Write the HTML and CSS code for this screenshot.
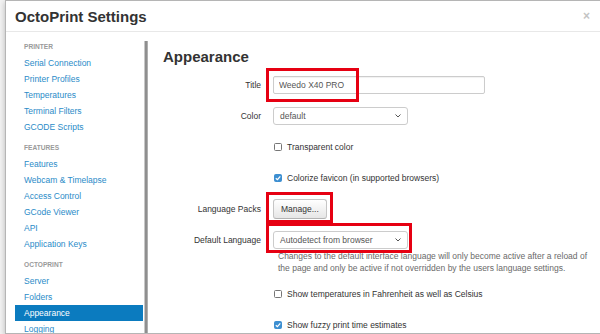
FILE: index.html
```html
<!DOCTYPE html>
<html lang="en">
<head>
    <meta charset="UTF-8">
    <meta name="viewport" content="width=device-width, initial-scale=1.0">
    <title>OctoPrint Settings</title>
    <link rel="stylesheet" href="styles.css">
</head>
<body>
    <div class="modal">
        <div class="modal-header">
            <h3 class="modal-title">OctoPrint Settings</h3>
            <button class="close">&times;</button>
        </div>

        <div class="modal-body">
            <!-- sidebar navigation -->
            <div class="sidebar">
                <ul class="nav-list">
                    <li class="nav-header">Printer</li>
                    <li><a href="#">Serial Connection</a></li>
                    <li><a href="#">Printer Profiles</a></li>
                    <li><a href="#">Temperatures</a></li>
                    <li><a href="#">Terminal Filters</a></li>
                    <li><a href="#">GCODE Scripts</a></li>
                    <li class="nav-header">Features</li>
                    <li><a href="#">Features</a></li>
                    <li><a href="#">Webcam &amp; Timelapse</a></li>
                    <li><a href="#">Access Control</a></li>
                    <li><a href="#">GCode Viewer</a></li>
                    <li><a href="#">API</a></li>
                    <li><a href="#">Application Keys</a></li>
                    <li class="nav-header">OctoPrint</li>
                    <li><a href="#">Server</a></li>
                    <li><a href="#">Folders</a></li>
                    <li class="active"><a href="#">Appearance</a></li>
                    <li><a href="#">Logging</a></li>
                </ul>
                <div class="scrollbar"></div>
            </div>

            <!-- appearance settings -->
            <div class="content">
                <h3 class="section-title">Appearance</h3>
                <form class="form-horizontal">
                    <div class="control-group">
                        <label class="control-label">Title</label>
                        <div class="controls">
                            <input type="text" class="text-input" value="Weedo X40 PRO">
                            <span class="mark mark-title"></span>
                        </div>
                    </div>

                    <div class="control-group">
                        <label class="control-label">Color</label>
                        <div class="controls">
                            <div class="select">
                                <span>default</span>
                                <svg width="6" height="4" viewBox="0 0 6 4"><path d="M0.5 0.5L3 3L5.5 0.5" fill="none" stroke="#555" stroke-width="1"/></svg>
                            </div>
                        </div>
                    </div>

                    <div class="control-group">
                        <div class="controls">
                            <label class="checkbox"><span class="box"></span>Transparent color</label>
                        </div>
                    </div>

                    <div class="control-group">
                        <div class="controls">
                            <label class="checkbox"><span class="box checked"><svg width="8" height="8" viewBox="0 0 8 8"><path d="M1.8 4.2L3.4 5.7L6.3 2.4" fill="none" stroke="#fff" stroke-width="1.2"/></svg></span>Colorize favicon (in supported browsers)</label>
                        </div>
                    </div>

                    <div class="control-group">
                        <label class="control-label">Language Packs</label>
                        <div class="controls">
                            <button type="button" class="btn">Manage...</button>
                            <span class="mark mark-manage"></span>
                        </div>
                    </div>

                    <div class="control-group group-help">
                        <label class="control-label">Default Language</label>
                        <div class="controls">
                            <div class="select">
                                <span>Autodetect from browser</span>
                                <svg width="6" height="4" viewBox="0 0 6 4"><path d="M0.5 0.5L3 3L5.5 0.5" fill="none" stroke="#555" stroke-width="1"/></svg>
                            </div>
                            <p class="help-block">Changes to the default interface language will only become active after a reload of the page and only be active if not overridden by the users language settings.</p>
                            <span class="mark mark-language"></span>
                        </div>
                    </div>

                    <div class="control-group">
                        <div class="controls">
                            <label class="checkbox"><span class="box"></span>Show temperatures in Fahrenheit as well as Celsius</label>
                        </div>
                    </div>

                    <div class="control-group">
                        <div class="controls">
                            <label class="checkbox"><span class="box checked"><svg width="8" height="8" viewBox="0 0 8 8"><path d="M1.8 4.2L3.4 5.7L6.3 2.4" fill="none" stroke="#fff" stroke-width="1.2"/></svg></span>Show fuzzy print time estimates</label>
                        </div>
                    </div>
                </form>
            </div>
        </div>
    </div>
</body>
</html>
```

FILE: styles.css
```css
* {
    margin: 0;
    padding: 0;
    box-sizing: border-box;
}

body {
    font-family: 'Liberation Sans', Arial, sans-serif;
    font-size: 8.5px;
    color: #333;
    background-color: #f3f3f3;
    height: 334px;
    overflow: hidden;
}

.modal {
    margin-left: 5px;
    height: 334px;
    background-color: white;
    border: 1px solid #b5b5b5;
    border-right: none;
    box-shadow: 0 2px 6px rgba(0, 0, 0, 0.25);
    overflow: hidden;
}

.modal-header {
    height: 31px;
    padding: 0 9px;
    display: flex;
    justify-content: space-between;
    align-items: center;
    border-bottom: 1px solid #e8e8e8;
}

.modal-title {
    font-size: 15px;
    font-weight: bold;
    line-height: 31px;
    color: #333;
}

.close {
    border: none;
    background: none;
    font-family: 'Liberation Sans', Arial, sans-serif;
    font-size: 12px;
    font-weight: bold;
    color: #c4c4c4;
    line-height: 1;
    margin-right: 1px;
    cursor: pointer;
}

.modal-body {
    display: flex;
}

/* sidebar */

.sidebar {
    display: flex;
    margin-left: 9px;
    flex-shrink: 0;
}

.nav-list {
    list-style: none;
    width: 128px;
    padding-top: 7px;
}

.nav-list li a {
    display: block;
    height: 16px;
    line-height: 16px;
    padding-left: 9px;
    color: #2a8bc8;
    text-decoration: none;
}

.nav-list li.active a {
    background-color: #0b7bbf;
    color: white;
}

.nav-header {
    height: 16px;
    line-height: 16px;
    padding-left: 9px;
    font-size: 6.6px;
    font-weight: bold;
    text-transform: uppercase;
    color: #9a9a9a;
}

.nav-header:not(:first-child) {
    margin-top: 5px;
}

.scrollbar {
    width: 4px;
    margin: 9px 0 0 1px;
    height: 300px;
    background-color: #8f8f8f;
    border-left: 1px solid #c8c8c8;
    border-right: 1px solid #b0b0b0;
}

/* content */

.content {
    margin-left: 15px;
    flex: 1;
}

.section-title {
    font-size: 15px;
    font-weight: bold;
    line-height: 18px;
    margin-top: 16px;
    color: #333;
}

.form-horizontal {
    margin-top: 10px;
}

.control-group {
    display: flex;
    align-items: center;
    height: 18px;
    margin-bottom: 13px;
}

.control-group.group-help {
    height: auto;
    align-items: flex-start;
    margin-bottom: 11px;
}

.control-label {
    width: 110px;
    padding-right: 12px;
    text-align: right;
    line-height: 18px;
    color: #333;
}

.controls {
    position: relative;
    margin-left: 110px;
}

.control-label + .controls {
    margin-left: 0;
}

.text-input {
    display: block;
    width: 212px;
    height: 18px;
    padding: 0 5px;
    border: 1px solid #ccc;
    border-radius: 2px;
    font-family: inherit;
    font-size: 8.5px;
    color: #555;
    box-shadow: inset 0 1px 1px rgba(0, 0, 0, 0.06);
}

.select {
    width: 135px;
    height: 18px;
    padding: 0 6px;
    display: flex;
    align-items: center;
    justify-content: space-between;
    border: 1px solid #ccc;
    border-radius: 3px;
    background-color: white;
    color: #555;
}

.checkbox {
    display: flex;
    align-items: center;
    color: #333;
}

.box {
    width: 8px;
    height: 8px;
    margin-left: 1px;
    margin-right: 5px;
    border: 1px solid #767676;
    border-radius: 1.5px;
    background-color: white;
    display: flex;
    align-items: center;
    justify-content: center;
}

.box.checked {
    border-color: #3d8fd1;
    background-color: #3d8fd1;
}

.box svg {
    flex-shrink: 0;
}

.btn {
    height: 20px;
    padding: 0 7px;
    font-family: inherit;
    font-size: 8.5px;
    color: #333;
    background: linear-gradient(#ffffff, #e6e6e6);
    border: 1px solid #c5c5c5;
    border-bottom-color: #b3b3b3;
    border-radius: 3px;
    cursor: pointer;
}

.help-block {
    width: 322px;
    margin-top: 1px;
    padding-left: 5px;
    line-height: 12px;
    color: #6a6a6a;
}

/* red annotation frames */

.mark {
    position: absolute;
    border: 3px solid #e60012;
    pointer-events: none;
}

.mark-title {
    left: -7px;
    top: -8px;
    width: 93px;
    height: 34px;
}

.mark-manage {
    left: -7px;
    top: -7px;
    width: 67px;
    height: 31px;
}

.mark-language {
    left: -7px;
    top: -8px;
    width: 146px;
    height: 30px;
}
```
